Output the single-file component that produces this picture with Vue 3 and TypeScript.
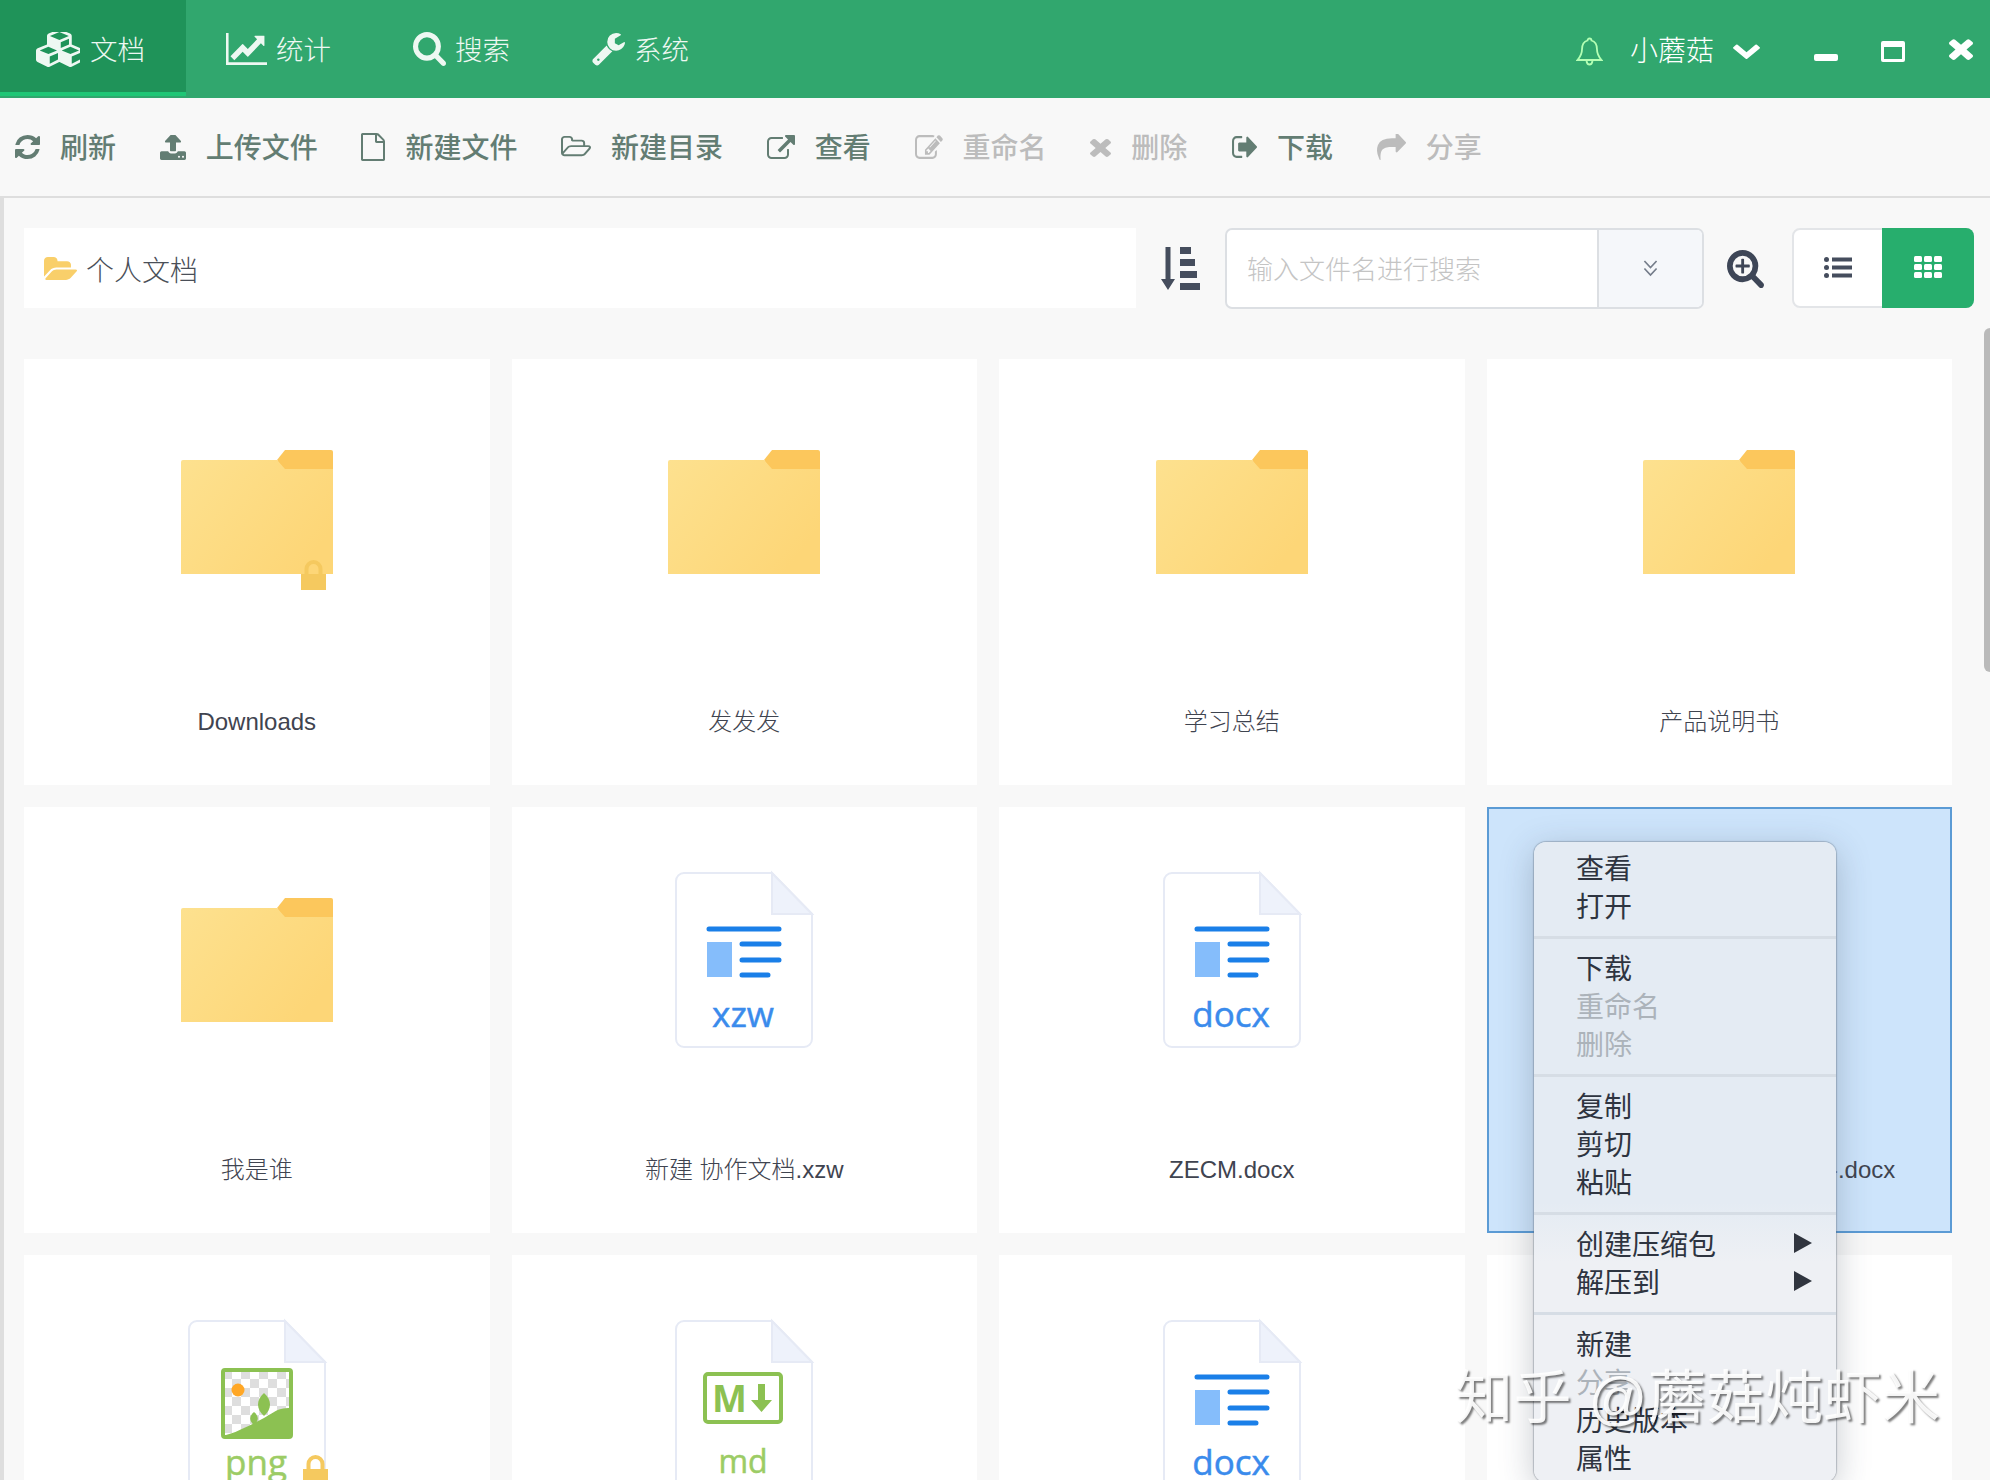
<script setup lang="ts">
interface IconDef {
  vb: string;
  d: string;
}

interface ToolItem {
  label: string;
  icon: string;
  disabled?: boolean;
}

interface CardItem {
  name: string;
  kind: 'folder' | 'doc' | 'png' | 'md';
  ext?: string;
  locked?: boolean;
  selected?: boolean;
}

const icons: Record<string, IconDef> = {
  cubes: {
    vb: '0 128 2048 1664',
    d: 'M640 1632l384-192v-314l-384 164v342zm-64-454l404-173-404-173-404 173zm1088 454l384-192v-314l-384 164v342zm-64-454l404-173-404-173-404 173zm-448-293l384-165v-266l-384 164v267zm-64-379l441-189-441-189-441 189zm1088 518v416q0 36-19 67t-52 47l-448 224q-25 14-57 14t-57-14l-448-224q-5-2-7-4-2 2-7 4l-448 224q-25 14-57 14t-57-14l-448-224q-33-16-52-47t-19-67v-416q0-38 21.5-70t56.5-48l434-186v-400q0-38 21.5-70t56.5-48l448-192q23-10 50-10t50 10l448 192q35 16 56.5 48t21.5 70v400l434 186q36 16 57 48t21 70z'
  },
  chart: {
    vb: '0 128 2048 1536',
    d: 'M2048 1536v128h-2048v-1536h128v1408h1920zm-128-1248v435q0 21-19.5 29.5t-35.5-7.5l-121-121-633 633q-10 10-23 10t-23-10l-233-233-416 416-192-192 585-585q10-10 23-10t23 10l233 233 464-464-121-121q-16-16-7.5-35.5t29.5-19.5h435q14 0 23 9t9 23z'
  },
  search: {
    vb: '64 128 1664 1664',
    d: 'M1216 832q0-185-131.5-316.5t-316.5-131.5-316.5 131.5-131.5 316.5 131.5 316.5 316.5 131.5 316.5-131.5 131.5-316.5zm512 832q0 52-38 90t-90 38q-54 0-90-38l-343-342q-179 124-399 124-143 0-273.5-55.5t-225-150-150-225-55.5-273.5 55.5-273.5 150-225 225-150 273.5-55.5 273.5 55.5 225 150 150 225 55.5 273.5q0 220-124 399l343 343q37 37 37 90z'
  },
  wrench: {
    vb: '64 128 1664 1664',
    d: 'M448 1472q0-26-19-45t-45-19-45 19-19 45 19 45 45 19 45-19 19-45zm644-420l-682 682q-37 37-90 37-52 0-91-37l-106-108q-38-36-38-90 0-53 38-91l681-681q39 98 114.5 173.5t173.5 114.5zm634-435q0 39-23 106-47 134-164.5 217.5t-258.5 83.5q-185 0-316.5-131.5t-131.5-316.5 131.5-316.5 316.5-131.5q58 0 121.5 16.5t107.5 46.5q16 11 16 28t-16 28l-293 169v224l193 107q5-3 79-48.5t135.5-81 70.5-35.5q15 0 23.5 10t8.5 25z'
  },
  chevron: {
    vb: '90 490 1612 1080',
    d: 'M1683 808l-742 741q-19 19-45 19t-45-19l-742-741q-19-19-19-45.5t19-45.5l166-165q19-19 45-19t45 19l531 531 531-531q19-19 45-19t45 19l166 165q19 19 19 45.5t-19 45.5z'
  },
  close: {
    vb: '302 238 1188 1316',
    d: 'M1490 1322q0 40-28 68l-136 136q-28 28-68 28t-68-28l-294-294-294 294q-28 28-68 28t-68-28l-136-136q-28-28-28-68t28-68l294-294-294-294q-28-28-28-68t28-68l136-136q28-28 68-28t68 28l294 294 294-294q28-28 68-28t68 28l136 136q28 28 28 68t-28 68l-294 294 294 294q28 28 28 68z'
  },
  refresh: {
    vb: '128 128 1536 1536',
    d: 'M1639 1056q0 5-1 7-64 268-268 434.5t-478 166.5q-146 0-282.5-55t-243.5-157l-129 129q-19 19-45 19t-45-19-19-45v-448q0-26 19-45t45-19h448q26 0 45 19t19 45-19 45l-137 137q71 66 161 102t187 36q134 0 250-65t186-179q11-17 53-117 8-23 30-23h192q13 0 22.5 9.5t9.5 22.5zm25-800v448q0 26-19 45t-45 19h-448q-26 0-45-19t-19-45 19-45l138-138q-148-137-349-137-134 0-250 65t-186 179q-11 17-53 117-8 23-30 23h-199q-13 0-22.5-9.5t-9.5-22.5v-7q65-268 270-434.5t480-166.5q146 0 284 55.5t245 156.5l130-129q19-19 45-19t45 19 19 45z'
  },
  upload: {
    vb: '64 192 1664 1472',
    d: 'M1344 1472q0-26-19-45t-45-19-45 19-19 45 19 45 45 19 45-19 19-45zm256 0q0-26-19-45t-45-19-45 19-19 45 19 45 45 19 45-19 19-45zm128-224v320q0 40-28 68t-68 28h-1472q-40 0-68-28t-28-68v-320q0-40 28-68t68-28h427q21 56 70.5 92t110.5 36h256q61 0 110.5-36t70.5-92h427q40 0 68 28t28 68zm-325-648q-17 40-59 40h-256v448q0 26-19 45t-45 19h-256q-26 0-45-19t-19-45v-448h-256q-42 0-59-40-17-39 14-69l448-448q18-19 45-19t45 19l448 448q31 30 14 69z'
  },
  file: {
    vb: '128 0 1536 1792',
    d: 'M1596 380q28 28 48 76t20 88v1152q0 40-28 68t-68 28h-1344q-40 0-68-28t-28-68v-1600q0-40 28-68t68-28h896q40 0 88 20t76 48zm-444-244v376h376q-10-29-22-41l-313-313q-12-12-41-22zm384 1528v-1024h-416q-40 0-68-28t-28-68v-416h-768v1536h1280z'
  },
  folderO: {
    vb: '0 128 1909 1536',
    d: 'M1781 931q0-35-53-35h-1088q-40 0-85.5 21.5t-71.5 52.5l-294 363q-18 24-18 40 0 35 53 35h1088q40 0 86-22t71-53l294-363q18-22 18-39zm-1141-163h768v-160q0-40-28-68t-68-28h-576q-40 0-68-28t-28-68v-64q0-40-28-68t-68-28h-320q-40 0-68 28t-28 68v853l256-315q44-53 116-87.5t140-34.5zm1269 163q0 62-46 120l-295 363q-43 53-116 87.5t-140 34.5h-1088q-92 0-158-66t-66-158v-960q0-92 66-158t158-66h320q92 0 158 66t66 158v32h544q92 0 158 66t66 158v160h192q54 0 99 24.5t67 70.5q15 32 15 68z'
  },
  external: {
    vb: '0 0 1792 1536',
    d: 'M1408 928v320q0 119-84.5 203.5t-203.5 84.5h-832q-119 0-203.5-84.5t-84.5-203.5v-832q0-119 84.5-203.5t203.5-84.5h704q14 0 23 9t9 23v64q0 14-9 23t-23 9h-704q-66 0-113 47t-47 113v832q0 66 47 113t113 47h832q66 0 113-47t47-113v-320q0-14 9-23t23-9h64q14 0 23 9t9 23zm384-864v512q0 26-19 45t-45 19-45-19l-176-176-652 652q-10 10-23 10t-23-10l-114-114q-10-10-10-23t10-23l652-652-176-176q-19-19-19-45t19-45 45-19h512q26 0 45 19t19 45z'
  },
  edit: {
    vb: '0 128 1800 1408',
    d: 'M888 1184l116-116-152-152-116 116v56h96v96h56zm440-720q-16-16-33 1l-350 350q-17 17-1 33t33-1l350-350q17-17 1-33zm80 594v190q0 119-84.5 203.5t-203.5 84.5h-832q-119 0-203.5-84.5t-84.5-203.5v-832q0-119 84.5-203.5t203.5-84.5h832q63 0 117 25 15 7 18 23 3 17-9 29l-49 49q-14 14-32 8-23-6-45-6h-832q-66 0-113 47t-47 113v832q0 66 47 113t113 47h832q66 0 113-47t47-113v-126q0-13 9-22l64-64q15-15 35-7t20 29zm-96-738l288 288-672 672h-288v-288zm444 132l-92 92-288-288 92-92q28-28 68-28t68 28l152 152q28 28 28 68t-28 68z'
  },
  signOut: {
    vb: '0 256 1632 1280',
    d: 'M704 1440q0 4 1 20t.5 26.5-3 23.5-10 19.5-20.5 6.5h-320q-119 0-203.5-84.5t-84.5-203.5v-704q0-119 84.5-203.5t203.5-84.5h320q13 0 22.5 9.5t9.5 22.5q0 4 1 20t.5 26.5-3 23.5-10 19.5-20.5 6.5h-320q-66 0-113 47t-47 113v704q0 66 47 113t113 47h312l11.5 1 11.5 3 8 5.5 7 9 2 13.5zm928-544q0 26-19 45l-544 544q-19 19-45 19t-45-19-19-45v-288h-448q-26 0-45-19t-19-45v-384q0-26 19-45t45-19h448v-288q0-26 19-45t45-19 45 19l544 544q19 19 19 45z'
  },
  share: {
    vb: '0 128 1792 1536',
    d: 'M1792 640q0 26-19 45l-512 512q-19 19-45 19t-45-19-19-45v-256h-224q-98 0-175.5 6t-154 21.5-133 42.5-105.5 69.5-80 101-48.5 138.5-17.5 181q0 55 5 123 0 6 2.5 23.5t2.5 26.5q0 15-8.5 25t-23.5 10q-16 0-28-17-7-9-13-22t-13.5-30-10.5-24q-127-285-127-451 0-199 53-333 162-403 875-403h224v-256q0-26 19-45t45-19 45 19l512 512q19 19 19 45z'
  },
  folderOpen: {
    vb: '0 128 1879 1536',
    d: 'M1879 952q0 31-31 66l-336 396q-43 51-120.5 86.5t-143.5 35.5h-1088q-34 0-60.5-13t-26.5-43q0-31 31-66l336-396q43-51 120.5-86.5t143.5-35.5h1088q34 0 60.5 13t26.5 43zm-343-344v160h-832q-94 0-197 47.5t-164 119.5l-337 396-5 6q0-4-.5-12.5t-.5-12.5v-960q0-92 66-158t158-66h320q92 0 158 66t66 158v32h544q92 0 158 66t66 158z'
  },
  searchPlus: {
    vb: '64 128 1664 1664',
    d: 'M1088 800v64q0 13-9.5 22.5t-22.5 9.5h-224v224q0 13-9.5 22.5t-22.5 9.5h-64q-13 0-22.5-9.5t-9.5-22.5v-224h-224q-13 0-22.5-9.5t-9.5-22.5v-64q0-13 9.5-22.5t22.5-9.5h224v-224q0-13 9.5-22.5t22.5-9.5h64q13 0 22.5 9.5t9.5 22.5v224h224q13 0 22.5 9.5t9.5 22.5zm128 32q0-185-131.5-316.5t-316.5-131.5-316.5 131.5-131.5 316.5 131.5 316.5 316.5 131.5 316.5-131.5 131.5-316.5zm512 832q0 53-37.5 90.5t-90.5 37.5q-54 0-90-38l-343-342q-179 124-399 124-143 0-273.5-55.5t-225-150-150-225-55.5-273.5 55.5-273.5 150-225 225-150 273.5-55.5 273.5 55.5 225 150 150 225 55.5 273.5q0 220-124 399l343 343q37 37 37 90z'
  }
};

const tabs = [
  { label: '文档', icon: 'cubes' },
  { label: '统计', icon: 'chart' },
  { label: '搜索', icon: 'search' },
  { label: '系统', icon: 'wrench' }
];

const tools: ToolItem[] = [
  { label: '刷新', icon: 'refresh' },
  { label: '上传文件', icon: 'upload' },
  { label: '新建文件', icon: 'file' },
  { label: '新建目录', icon: 'folderO' },
  { label: '查看', icon: 'external' },
  { label: '重命名', icon: 'edit', disabled: true },
  { label: '删除', icon: 'close', disabled: true },
  { label: '下载', icon: 'signOut' },
  { label: '分享', icon: 'share', disabled: true }
];

const cards: CardItem[] = [
  { name: 'Downloads', kind: 'folder', locked: true },
  { name: '发发发', kind: 'folder' },
  { name: '学习总结', kind: 'folder' },
  { name: '产品说明书', kind: 'folder' },
  { name: '我是谁', kind: 'folder' },
  { name: '新建 协作文档.xzw', kind: 'doc', ext: 'xzw' },
  { name: 'ZECM.docx', kind: 'doc', ext: 'docx' },
  { name: '产品说明书与学习 总结资料.docx', kind: 'doc', ext: 'docx', selected: true },
  { name: '图片.png', kind: 'png', ext: 'png', locked: true },
  { name: 'README.md', kind: 'md', ext: 'md' },
  { name: '说明.docx', kind: 'doc', ext: 'docx' },
  { name: '资料.docx', kind: 'doc', ext: 'docx' }
];

const menuGroups = [
  [{ label: '查看' }, { label: '打开' }],
  [{ label: '下载' }, { label: '重命名', disabled: true }, { label: '删除', disabled: true }],
  [{ label: '复制' }, { label: '剪切' }, { label: '粘贴' }],
  [{ label: '创建压缩包', sub: true }, { label: '解压到', sub: true }],
  [{ label: '新建' }, { label: '分享', disabled: true }, { label: '历史版本' }, { label: '属性' }]
];
</script>

<template>
  <div class="app">
    <header class="topbar">
      <nav class="tabs">
        <div v-for="(tab, i) in tabs" :key="tab.label" class="tab" :class="{ active: i === 0 }">
          <svg class="ic" :class="'ic-' + tab.icon" :viewBox="icons[tab.icon].vb" preserveAspectRatio="none">
            <path :d="icons[tab.icon].d" />
          </svg>
          <span>{{ tab.label }}</span>
        </div>
      </nav>
      <div class="user">
        <svg class="bell" viewBox="0 0 27 29">
          <path d="M13.5 1.5c1.2 0 2 .8 2 2 4 1 5.500 4.500 5.500 9 0 4 1.500 7 4.500 10.500h-24c3-3.500 4.500-6.500 4.500-10.500 0-4.500 1.500-8 5.500-9 0-1.200.8-2 2-2z" />
          <path d="M10.500 24c.3 2 1.500 3.500 3 3.500s2.700-1.500 3-3.500" />
        </svg>
        <span class="user-name">小蘑菇</span>
        <svg class="ic ic-user-arrow" :viewBox="icons.chevron.vb" preserveAspectRatio="none">
          <path :d="icons.chevron.d" />
        </svg>
        <span class="win-min"></span>
        <span class="win-max"></span>
        <svg class="ic ic-win-close" :viewBox="icons.close.vb" preserveAspectRatio="none">
          <path :d="icons.close.d" />
        </svg>
      </div>
    </header>

    <div class="toolbar">
      <div v-for="tool in tools" :key="tool.label" class="tool" :class="{ disabled: tool.disabled }">
        <svg class="ic" :class="'ic-' + tool.icon" :viewBox="icons[tool.icon].vb" preserveAspectRatio="none">
          <path :d="icons[tool.icon].d" />
        </svg>
        <span>{{ tool.label }}</span>
      </div>
    </div>

    <main class="main">
      <div class="filter-row">
        <div class="path-bar">
          <svg class="ic ic-path" :viewBox="icons.folderOpen.vb" preserveAspectRatio="none">
            <path :d="icons.folderOpen.d" />
          </svg>
          <span>个人文档</span>
        </div>
        <svg class="sort" viewBox="0 0 39 43">
          <path d="M4.500 0h5v32h4.500l-7 11-7-11h4.500z" />
          <rect x="19" y="0" width="11" height="7" />
          <rect x="19" y="12" width="15" height="7" />
          <rect x="19" y="24" width="17" height="7" />
          <rect x="19" y="36" width="20" height="7" />
        </svg>
        <div class="search">
          <span class="search-text">输入文件名进行搜索</span>
          <div class="search-addon">
            <svg viewBox="0 0 16 20">
              <path d="M1.500 2l6.500 7 6.500-7M1.500 10l6.500 7 6.500-7" />
            </svg>
          </div>
        </div>
        <svg class="ic ic-zoom" :viewBox="icons.searchPlus.vb" preserveAspectRatio="none">
          <path :d="icons.searchPlus.d" />
        </svg>
        <div class="view-toggle">
          <div class="view-btn">
            <svg viewBox="0 0 28 21">
              <circle cx="2.500" cy="2.500" r="2.500" />
              <circle cx="2.500" cy="10.500" r="2.500" />
              <circle cx="2.500" cy="18.500" r="2.500" />
              <rect x="8" y="0.500" width="20" height="4" />
              <rect x="8" y="8.500" width="20" height="4" />
              <rect x="8" y="16.500" width="20" height="4" />
            </svg>
          </div>
          <div class="view-btn on">
            <svg viewBox="0 0 28 22">
              <template v-for="row in 3" :key="row">
                <rect v-for="col in 3" :key="col" :x="(col - 1) * 10" :y="(row - 1) * 8" width="8" height="6" rx="1.500" />
              </template>
            </svg>
          </div>
        </div>
      </div>

      <div class="grid">
        <div v-for="card in cards" :key="card.name" class="card" :class="{ selected: card.selected }">
          <div class="thumb" :class="card.kind === 'folder' ? 'thumb-folder' : 'thumb-file'">
            <svg v-if="card.kind === 'folder'" class="folder" viewBox="0 0 152 124">
              <defs>
                <linearGradient id="folderFill" x1="0" y1="0" x2="1" y2="0.600">
                  <stop offset="0" stop-color="#fde18f" />
                  <stop offset="1" stop-color="#fdd677" />
                </linearGradient>
              </defs>
              <path d="M96 10l8-10h46a2 2 0 0 1 2 2v20h-48z" fill="#fcc75c" />
              <path d="M2 10h94l8 9h48v105H0V12a2 2 0 0 1 2-2z" fill="url(#folderFill)" />
            </svg>

            <svg v-else class="file" viewBox="0 0 138 176">
              <defs>
                <pattern id="checker" width="18" height="18" patternUnits="userSpaceOnUse" x="35" y="50">
                  <rect width="18" height="18" fill="#fff" />
                  <rect width="9" height="9" fill="#dedede" />
                  <rect x="9" y="9" width="9" height="9" fill="#dedede" />
                </pattern>
              </defs>
              <path class="sheet" d="M9 1h88l40 41v125a8 8 0 0 1-8 8H9a8 8 0 0 1-8-8V9a8 8 0 0 1 8-8z" />
              <path class="fold" d="M97 1l40 41H97z" />

              <g v-if="card.kind === 'doc'">
                <path class="doc-line" d="M34 57h70M67 72h37M67 88h37M67 103h26" />
                <rect x="32" y="70" width="25" height="35" fill="#85bdfb" />
                <text class="ext ext-doc" x="68" y="155">{{ card.ext }}</text>
              </g>

              <g v-else-if="card.kind === 'png'">
                <rect x="35" y="50" width="68" height="67" fill="url(#checker)" />
                <circle cx="50" cy="70" r="6.500" fill="#ffa726" />
                <path d="M76 73c8 7 8 16 0 23-8-7-8-16 0-23z" fill="#8cc152" />
                <path d="M66 92c5 4 5 9 0 13-5-4-5-9 0-13z" fill="#8cc152" />
                <path d="M38 115c7-2 12-4 18-7 7-3 14-7 20-10 7-4 12-8 17-9 3-.7 6-1 10-1v29z" fill="#8cc152" />
                <rect x="35" y="50" width="68" height="67" rx="2" fill="none" stroke="#8cc152" stroke-width="4" />
                <text class="ext ext-green" x="68" y="155">{{ card.ext }}</text>
              </g>

              <g v-else>
                <rect x="30" y="54" width="76" height="48" rx="3" fill="none" stroke="#8cc152" stroke-width="4" />
                <text class="md-m" x="37" y="92">M</text>
                <path d="M83 64h7v16h7L86.500 92 76 80h7z" fill="#8cc152" />
                <text class="ext ext-md" x="68" y="153">{{ card.ext }}</text>
              </g>
            </svg>

            <svg v-if="card.locked" class="lock" :class="card.kind === 'folder' ? 'lock-folder' : 'lock-file'" viewBox="0 0 25 31">
              <path d="M5.500 16V10a7 7 0 0 1 14 0v6" fill="none" stroke="#f5c95f" stroke-width="4" />
              <rect x="0" y="15" width="25" height="16" fill="#f5c95f" />
            </svg>
          </div>
          <div class="card-name">{{ card.name }}</div>
        </div>
      </div>
    </main>

    <div class="scroll-thumb"></div>

    <div class="context-menu">
      <div v-for="(group, g) in menuGroups" :key="g" class="menu-group">
        <div
          v-for="item in group"
          :key="item.label"
          class="menu-item"
          :class="{ disabled: item.disabled }"
        >
          <span>{{ item.label }}</span>
          <i v-if="item.sub" class="menu-arrow"></i>
        </div>
      </div>
    </div>

    <div class="watermark">知乎 @蘑菇炖虾米</div>
  </div>
</template>

<style>
html,
body {
  margin: 0;
  background: #f8f8f8;
}
</style>

<style scoped>
.app {
  position: relative;
  width: 1990px;
  height: 1480px;
  overflow: hidden;
  background: #f8f8f8;
  font-family: "Liberation Sans", "Noto Sans CJK SC", sans-serif;
  color: #3f4450;
}

.ic path {
  fill: currentColor;
}

/* top bar */
.topbar {
  display: flex;
  justify-content: space-between;
  height: 98px;
  background: #31a76e;
  color: #fff;
}

.tabs {
  display: flex;
}

.tab {
  display: flex;
  align-items: center;
  gap: 9px;
  padding: 0 42px 0 40px;
  font-size: 27.500px;
  font-weight: 300;
  color: #eef8f2;
}

.tab span {
  margin-top: -2px;
}

.tab:first-child {
  gap: 10px;
  padding: 0 41px 0 36px;
}

.tab.active {
  background: linear-gradient(#1f9359 92px, #1fc776 92px, #1fc776 96px, #31a76e 96px);
}

.ic-cubes { width: 44px; height: 35px; }
.ic-chart { width: 41px; height: 32px; }
.ic-search { width: 33px; height: 34px; }
.ic-wrench { width: 33px; height: 33px; }

.user {
  display: flex;
  align-items: center;
  padding-right: 17px;
  height: 98px;
}

.bell {
  width: 27px;
  height: 29px;
  margin-top: 5px;
  fill: none;
  stroke: #b4ffb4;
  stroke-width: 1.800;
}

.user-name {
  margin-left: 27px;
  font-size: 28px;
  font-weight: 300;
}

.ic-user-arrow {
  width: 27px;
  height: 15px;
  margin: 5px 0 0 19px;
}

.win-min {
  width: 24px;
  height: 7px;
  margin: 17px 0 0 54px;
  border-radius: 2px;
  background: #fff;
}

.win-max {
  box-sizing: border-box;
  width: 24px;
  height: 21px;
  margin: 5px 0 0 43px;
  border: 3px solid #fff;
  border-top-width: 6px;
  border-radius: 2px;
}

.ic-win-close {
  width: 24px;
  height: 23px;
  margin: -2px 0 0 44px;
}

/* toolbar */
.toolbar {
  display: flex;
  align-items: center;
  gap: 43.700px;
  height: 98px;
  padding-left: 15px;
  border-bottom: 2px solid #dedede;
  font-size: 28px;
  font-weight: 500;
  color: #637d73;
}

.tool {
  display: flex;
  align-items: center;
  gap: 20px;
}

.tool span {
  margin-top: -2px;
}

.tool.disabled {
  color: #bcbcbc;
}

.ic-refresh { width: 25px; height: 24px; }
.ic-upload { width: 26px; height: 25px; }
.ic-file { width: 24px; height: 28px; }
.ic-folderO { width: 30px; height: 22px; }
.ic-external { width: 28px; height: 24px; }
.ic-edit { width: 28px; height: 24px; }
.ic-close { width: 21px; height: 20px; }
.ic-signOut { width: 26px; height: 22px; }
.ic-share { width: 29px; height: 26px; }

/* main area */
.main {
  height: 1282px;
  padding: 30px 0 0 20px;
  border-left: 4px solid #dedede;
  box-sizing: border-box;
}

.filter-row {
  display: flex;
  align-items: flex-start;
  height: 81px;
}

.path-bar {
  display: flex;
  align-items: center;
  gap: 9px;
  width: 1112px;
  height: 80px;
  padding: 2px 0 0 20px;
  box-sizing: border-box;
  background: #fff;
  font-size: 28px;
  font-weight: 300;
  color: #4a4f58;
}

.ic-path {
  width: 33px;
  height: 25px;
  color: #f9cf6a;
}

.sort {
  width: 39px;
  height: 43px;
  margin: 19px 0 0 25px;
  fill: #454d5d;
}

.search {
  display: flex;
  width: 479px;
  height: 81px;
  margin-left: 25px;
  box-sizing: border-box;
  border: 2px solid #dcdfe3;
  border-radius: 7px;
  background: #fff;
  overflow: hidden;
}

.search-text {
  flex: 1;
  padding: 2px 0 0 20px;
  line-height: 77px;
  font-size: 26px;
  font-weight: 300;
  color: #c4c4c4;
}

.search-addon {
  display: flex;
  align-items: center;
  justify-content: center;
  width: 103px;
  border-left: 2px solid #dcdfe3;
  background: #f5f7fa;
}

.search-addon svg {
  width: 15px;
  height: 19px;
  fill: none;
  stroke: #757d8a;
  stroke-width: 1.800;
}

.ic-zoom {
  width: 37px;
  height: 38px;
  margin: 22px 0 0 23px;
  color: #3e4657;
}

.view-toggle {
  display: flex;
  width: 182px;
  height: 80px;
  margin-left: 28px;
  box-sizing: border-box;
  border: 2px solid #e3e5e8;
  border-radius: 8px;
  background: #fff;
}

.view-btn {
  display: flex;
  flex: none;
  align-items: center;
  justify-content: center;
  width: 88px;
  padding-bottom: 2px;
  box-sizing: border-box;
}

.view-btn svg {
  width: 28px;
  height: 21px;
  fill: #454d5d;
}

.view-btn.on {
  flex: 1;
  margin: -2px -2px -2px 0;
  border-radius: 0 8px 8px 0;
  background: #27ae6d;
}

.view-btn.on svg {
  height: 22px;
  fill: #fff;
}

/* file grid */
.grid {
  display: grid;
  grid-template-columns: repeat(4, 1fr);
  grid-auto-rows: 426px;
  gap: 22px;
  width: 1928px;
  margin-top: 50px;
}

.card {
  display: flex;
  flex-direction: column;
  align-items: center;
  box-sizing: border-box;
  padding-bottom: 46px;
  background: #fff;
}

.card.selected {
  padding-bottom: 44px;
  border: 2px solid #5b9bd5;
  background: #cde4fb;
}

.thumb {
  position: relative;
}

.thumb-folder {
  margin-top: 91px;
}

.thumb-file {
  margin-top: 65px;
}

.selected .thumb-file {
  margin-top: 63px;
}

.folder {
  display: block;
  width: 152px;
  height: 124px;
}

.file {
  display: block;
  width: 138px;
  height: 176px;
  overflow: visible;
}

.sheet {
  fill: #fff;
  stroke: #e6eaf5;
  stroke-width: 2;
}

.fold {
  fill: #eef2fb;
  stroke: #e6eaf5;
  stroke-width: 2;
}

.doc-line {
  fill: none;
  stroke: #1a7fe8;
  stroke-width: 5;
  stroke-linecap: round;
}

.ext {
  font-family: "Open Sans", sans-serif;
  font-size: 35px;
  text-anchor: middle;
  stroke-width: 0.500px;
}

.ext-doc {
  fill: #3a8bec;
  stroke: #3a8bec;
}

.ext-green {
  fill: #9ccc65;
  stroke: #9ccc65;
}

.ext-md {
  font-size: 32px;
  fill: #9ccc65;
  stroke: #9ccc65;
}

.md-m {
  font-family: "Open Sans", sans-serif;
  font-size: 37px;
  font-weight: 700;
  fill: #8cc152;
}

.lock {
  position: absolute;
  width: 25px;
  height: 31px;
}

.lock-folder {
  left: 120px;
  top: 109px;
}

.lock-file {
  left: 115px;
  top: 134px;
}

.card-name {
  margin-top: auto;
  line-height: 34px;
  font-size: 24px;
  font-weight: 300;
  white-space: nowrap;
}

.scroll-thumb {
  position: absolute;
  right: 0;
  top: 328px;
  width: 6px;
  height: 344px;
  border-radius: 6px 0 0 6px;
  background: #bababa;
}

/* context menu */
.context-menu {
  position: absolute;
  left: 1534px;
  top: 842px;
  width: 302px;
  padding: 6px 0;
  border-radius: 12px;
  background: linear-gradient(#e4ebf3 0, #e4ebf3 360px, #eef0f4 420px);
  box-shadow: 0 0 1px 1px rgba(90, 100, 115, 0.35), 0 8px 34px rgba(50, 60, 80, 0.28);
}

.menu-group + .menu-group {
  margin-top: 12px;
  padding-top: 12px;
  background: linear-gradient(#d6dde5, #d6dde5) 0 0 / 100% 3px no-repeat;
}

.menu-item {
  display: flex;
  align-items: center;
  justify-content: space-between;
  height: 38px;
  padding: 0 24px 0 42px;
  font-size: 28px;
  color: #2e3440;
}

.menu-item.disabled {
  color: #acb3ba;
}

.menu-arrow {
  width: 0;
  height: 0;
  border-left: 18px solid #30353f;
  border-top: 10px solid transparent;
  border-bottom: 10px solid transparent;
}

.watermark {
  position: absolute;
  left: 1455px;
  top: 1359px;
  font-size: 58px;
  line-height: 78px;
  letter-spacing: 0.500px;
  white-space: nowrap;
  color: rgba(255, 255, 255, 0.92);
  text-shadow: 2px 2px 2px rgba(0, 0, 0, 0.5);
  pointer-events: none;
}
</style>
